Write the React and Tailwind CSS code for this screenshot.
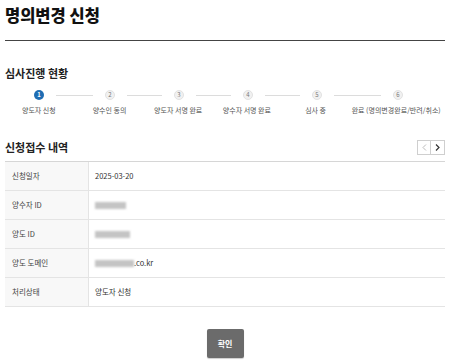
import React from "react";

const steps = [
  "양도자 신청",
  "양수인 동의",
  "양도자 서명 완료",
  "양수자 서명 완료",
  "심사 중",
  "완료 (명의변경완료/반려/취소)",
];

const labelCols = ["w-[68px]", "w-[74px]", "w-[64px]", "w-[74px]", "w-[64px]", "w-[98px]"];
const lineWidths = ["w-[37px]", "w-[35px]", "w-[35px]", "w-[35px]", "w-[47px]"];

const Blur = ({ w }) => (
  <span className={`inline-block h-[7px] ${w} bg-[#c4c4c4] blur-[1px] align-middle`} />
);

const rows = [
  { label: "신청일자", value: "2025-03-20" },
  { label: "양수자 ID", value: <Blur w="w-[31px]" /> },
  { label: "양도 ID", value: <Blur w="w-[35px]" /> },
  {
    label: "양도 도메인",
    value: (
      <span className="flex items-center">
        <Blur w="w-[39px]" />
        <span>.co.kr</span>
      </span>
    ),
  },
  { label: "처리상태", value: "양도자 신청" },
];

const App = () => {
  return (
    <div
      className="w-[450px] h-[361px] bg-white px-[5px] text-[#333] overflow-hidden"
      style={{ fontFamily: '"Noto Sans CJK KR", "Noto Sans", sans-serif' }}
    >
      <h1 className="h-[41px] pt-[3px] border-b border-[#444] text-[16.5px] leading-[24px] font-extrabold text-[#111]">
        명의변경 신청
      </h1>

      <h2 className="mt-[24px] text-[11px] leading-[16px] font-semibold text-[#222]">심사진행 현황</h2>

      <div className="mt-[9px] flex items-center h-[10px] pl-[29px]">
        {steps.map((s, i) => (
          <React.Fragment key={s}>
            <span
              className={
                i === 0
                  ? "flex items-center justify-center w-[10px] h-[10px] rounded-full bg-[#1f6db3] text-white text-[6px] font-bold leading-none"
                  : "flex items-center justify-center w-[10px] h-[10px] rounded-full bg-[#f1f1f1] border border-[#e2e2e2] text-[#777] text-[6px] leading-none"
              }
            >
              {i + 1}
            </span>
            {i < 5 && <span className={`${lineWidths[i]} mx-[12px] h-px bg-[#dcdcdc]`} />}
          </React.Fragment>
        ))}
      </div>

      <div className="mt-[5px] flex">
        {steps.map((s, i) => (
          <div key={s} className={`${labelCols[i]} flex justify-center`}>
            <span className="whitespace-nowrap text-[7px] leading-[10px] text-[#555]">{s}</span>
          </div>
        ))}
      </div>

      <div className="mt-[24px] flex items-center justify-between h-[16px]">
        <h2 className="text-[11px] leading-[16px] font-semibold text-[#222]">신청접수 내역</h2>
        <div className="flex">
          <button className="w-[14px] h-[15px] border border-[#cfcfcf] flex items-center justify-center text-[#bbb]">
            <svg width="5" height="7" viewBox="0 0 5 7" fill="none">
              <path d="M4 0.5L1 3.5L4 6.5" stroke="currentColor" strokeWidth="1" />
            </svg>
          </button>
          <button className="w-[14px] h-[15px] border border-l-0 border-[#cfcfcf] flex items-center justify-center text-[#333]">
            <svg width="5" height="7" viewBox="0 0 5 7" fill="none">
              <path d="M1 0.5L4 3.5L1 6.5" stroke="currentColor" strokeWidth="1.2" />
            </svg>
          </button>
        </div>
      </div>

      <div className="mt-[6px] border-t border-[#d6d6d6]">
        {rows.map((r) => (
          <div key={r.label} className="flex h-[29px] border-b border-[#e4e4e4]">
            <div className="w-[84px] bg-[#f8f8f8] border-r border-[#e4e4e4] flex items-center pl-[7px] text-[7.5px] text-[#444]">
              {r.label}
            </div>
            <div className="flex-1 flex items-center pl-[6px] text-[7.5px] text-[#333]">{r.value}</div>
          </div>
        ))}
      </div>

      <div className="mt-[22px] flex justify-center">
        <button className="w-[37px] h-[29px] rounded-[2px] bg-[#6b6b6b] text-white text-[8px] font-bold shadow-[0_1px_1px_rgba(0,0,0,0.2)]">
          확인
        </button>
      </div>
    </div>
  );
};

export default App;
